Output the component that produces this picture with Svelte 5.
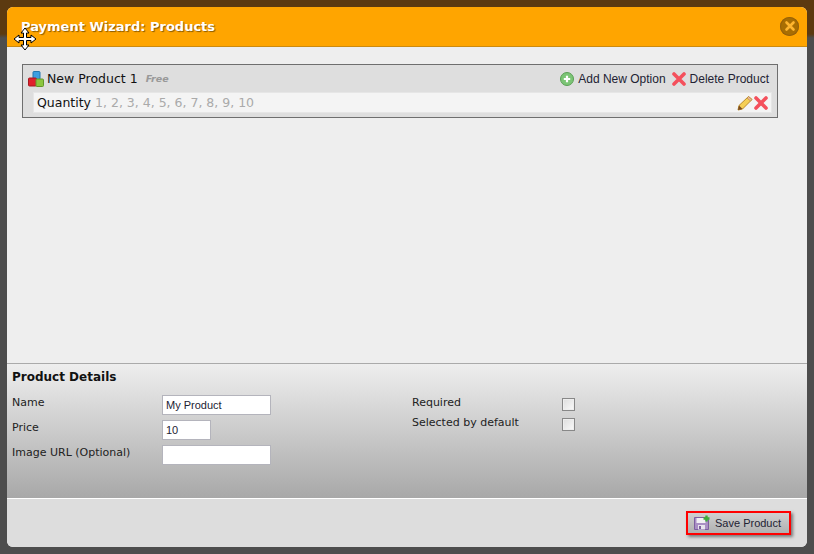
<script>
	const details = [
		{ label: 'Name', value: 'My Product', size: 'wide' },
		{ label: 'Price', value: '10', size: 'narrow' },
		{ label: 'Image URL (Optional)', value: '', size: 'wide' }
	];
	const flags = ['Required', 'Selected by default'];
</script>

<div class="backdrop">
	<div class="wizard">
		<header class="title-bar">
			<h1>Payment Wizard: Products</h1>
			<button class="close" aria-label="Close">
				<svg width="12" height="12" viewBox="0 0 12 12">
					<path d="M2.5 2.5l7 7M9.5 2.5l-7 7" stroke="#ffb52e" stroke-width="2.6" stroke-linecap="round" />
				</svg>
			</button>
		</header>

		<main class="products">
			<section class="product">
				<div class="product-head">
					<svg class="blocks" width="16" height="16" viewBox="0 0 16 16">
						<rect x="5" y="0.5" width="7" height="8" rx="1" fill="#3c9fe0" stroke="#2277b0" />
						<rect x="0.5" y="7" width="8" height="8" rx="1" fill="#e0212c" stroke="#a81820" />
						<rect x="8" y="8" width="7.5" height="7.5" rx="1" fill="#8cc63f" stroke="#63962a" />
					</svg>
					<span class="product-name">New Product 1</span>
					<em class="price-tag">Free</em>
					<span class="actions">
						<span class="action">
							<svg width="14" height="14" viewBox="0 0 14 14">
								<circle cx="7" cy="7" r="6.5" fill="#7cc576" stroke="#5a9f55" />
								<path d="M7 3.8v6.4M3.8 7h6.4" stroke="#fff" stroke-width="2.2" />
							</svg>
							Add New Option
						</span>
						<span class="action">
							<svg width="14" height="14" viewBox="0 0 14 14">
								<path d="M2 2l10 10M12 2L2 12" stroke="#f4505c" stroke-width="3.6" stroke-linecap="round" />
							</svg>
							Delete Product
						</span>
					</span>
				</div>
				<div class="option">
					<span class="option-name">Quantity</span>
					<span class="option-values">1, 2, 3, 4, 5, 6, 7, 8, 9, 10</span>
					<span class="option-tools">
						<svg width="16" height="16" viewBox="0 0 16 16">
							<path d="M1 15l1-4.5L11.5 1.5 15 4.5 5.5 14z" fill="#f5cf55" stroke="#b98a2a" />
							<path d="M11.5 1.5L15 4.5 13.5 6 10 3z" fill="#e9b7a0" stroke="#b98a2a" stroke-width=".6" />
							<path d="M1 15l1-4.5 3.5 3.5z" fill="#7a4a20" />
						</svg>
						<svg width="14" height="14" viewBox="0 0 14 14">
							<path d="M2 2l10 10M12 2L2 12" stroke="#f4505c" stroke-width="3.6" stroke-linecap="round" />
						</svg>
					</span>
				</div>
			</section>
		</main>

		<section class="details">
			<h2>Product Details</h2>
			<div class="columns">
				<div class="fields">
					{#each details as d}
						<label class="field">
							<span>{d.label}</span>
							<input class={d.size} type="text" value={d.value} />
						</label>
					{/each}
				</div>
				<div class="flags">
					{#each flags as f}
						<label class="flag">
							<span>{f}</span>
							<i class="check"></i>
						</label>
					{/each}
				</div>
			</div>
		</section>

		<footer class="bottom">
			<button class="save">
				<svg width="16" height="16" viewBox="0 0 16 16">
					<path d="M0.5 2.5h12l2 2v10h-14z" fill="#a98fc4" stroke="#7d5fa0" />
					<rect x="2.5" y="3" width="9" height="5" fill="#f2f0f5" />
					<rect x="4" y="10" width="7" height="4.5" fill="#e8e4ee" />
					<rect x="5" y="11" width="2" height="3" fill="#7d5fa0" />
					<path d="M12.5 0.5v6M9.5 3.5h6" stroke="#3fae3a" stroke-width="2.4" />
				</svg>
				Save Product
			</button>
		</footer>
	</div>

	<svg class="move-cursor" width="24" height="24" viewBox="0 0 24 24">
		<path d="M12 1l4 5h-2.500v4.500H18V8l5 4-5 4v-2.500h-4.500V18H16l-4 5-4-5h2.500v-4.500H6V16l-5-4 5-4v2.500h4.500V6H8z" fill="#fff" stroke="#000" stroke-width="1" />
	</svg>
</div>

<style>
	:global(body) {
		margin: 0;
		background: #4a4a4a;
	}

	.backdrop {
		position: relative;
		box-sizing: border-box;
		width: 814px;
		height: 554px;
		padding: 7px;
		overflow: hidden;
		background: linear-gradient(#5c3a10 0, #5c3a10 34px, #4d4d4d 38px);
		font-family: "DejaVu Sans", Verdana, sans-serif;
		color: #111;
	}

	.wizard {
		display: flex;
		flex-direction: column;
		height: 540px;
		border-radius: 6px;
		overflow: hidden;
		background: #eee;
	}

	.title-bar {
		display: flex;
		align-items: center;
		justify-content: space-between;
		box-sizing: border-box;
		height: 40px;
		padding: 0 8px 1px 14px;
		background: #ffa500;
		border-bottom: 1px solid #cc8a10;
	}

	h1 {
		margin: 0;
		font-size: 13px;
		font-weight: bold;
		color: #fff;
		text-shadow: 1px 1px 1px #8a5a00;
	}

	.close {
		display: flex;
		align-items: center;
		justify-content: center;
		width: 19px;
		height: 19px;
		padding: 0;
		border: 0;
		border-radius: 50%;
		background: #a96e02;
		box-shadow: inset 0 0 0 1px #97610a;
	}

	.products {
		flex: 1;
		padding: 17px 29px 0 15px;
		background: #eee;
	}

	.product {
		box-sizing: border-box;
		height: 54px;
		background: #dedede;
		border: 1px solid #6e6e6e;
	}

	.product-head {
		display: flex;
		align-items: center;
		height: 27px;
		padding: 0 8px 0 5px;
	}

	.product-name {
		margin-left: 3px;
		font-size: 12.500px;
	}

	.price-tag {
		margin-left: 8px;
		font-size: 9.500px;
		font-weight: bold;
		color: #999;
	}

	.actions {
		display: flex;
		gap: 6px;
		margin-left: auto;
		font-family: "Liberation Sans", Arial, sans-serif;
		font-size: 12px;
		color: #223;
	}

	.action {
		display: flex;
		align-items: center;
		gap: 4px;
	}

	.option {
		display: flex;
		align-items: center;
		box-sizing: border-box;
		height: 21px;
		margin: 0 5px 0 10px;
		padding: 0 3px;
		background: #f4f4f4;
		border: 1px solid #e6e6e6;
		font-size: 12.500px;
	}

	.option-values {
		margin-left: 4px;
		color: #aaa;
	}

	.option-tools {
		display: flex;
		align-items: center;
		gap: 1px;
		margin-left: auto;
	}

	.details {
		box-sizing: border-box;
		height: 135px;
		padding: 6px 5px 0;
		border-top: 1px solid #aaa;
		background: linear-gradient(#eee, #a8a8a8);
	}

	h2 {
		margin: 0 0 11px;
		font-size: 12px;
		font-weight: bold;
	}

	.columns {
		display: flex;
	}

	.fields {
		display: flex;
		flex-direction: column;
		width: 400px;
	}

	.field {
		display: flex;
		height: 25px;
		font-size: 11px;
		color: #222;
	}

	.field span {
		width: 150px;
		padding-top: 1px;
	}

	input {
		box-sizing: border-box;
		height: 20px;
		padding: 0 3px;
		border: 1px solid #b4b4bc;
		background: #fff;
		font-family: "Liberation Sans", Arial, sans-serif;
		font-size: 11px;
		color: #223;
	}

	.wide {
		width: 109px;
	}

	.narrow {
		width: 49px;
	}

	.flags {
		display: flex;
		flex-direction: column;
		font-size: 11px;
		color: #222;
	}

	.flag {
		display: flex;
		height: 19px;
		padding-top: 1px;
	}

	.flag span {
		width: 150px;
	}

	.check {
		box-sizing: border-box;
		width: 13px;
		height: 13px;
		margin-top: 2px;
		border: 1px solid #888;
		background: linear-gradient(135deg, #ddd, #fafafa);
		box-shadow: inset 0 0 0 1px #eee;
	}

	.bottom {
		display: flex;
		align-items: center;
		justify-content: flex-end;
		box-sizing: border-box;
		height: 49px;
		padding: 0 16px 0 0;
		background: #ddd;
		border-top: 1px solid #fff;
	}

	.save {
		display: flex;
		align-items: center;
		gap: 5px;
		box-sizing: border-box;
		width: 105px;
		height: 24px;
		margin-top: -1px;
		padding: 0 0 0 6px;
		border: 2px solid #f00;
		background: linear-gradient(#d0d0d0, #b0b0b0);
		box-shadow: 2px 2px 3px #777;
		font-family: "Liberation Sans", Arial, sans-serif;
		font-size: 11px;
		color: #223;
	}

	.move-cursor {
		position: absolute;
		left: 13px;
		top: 27px;
	}
</style>
